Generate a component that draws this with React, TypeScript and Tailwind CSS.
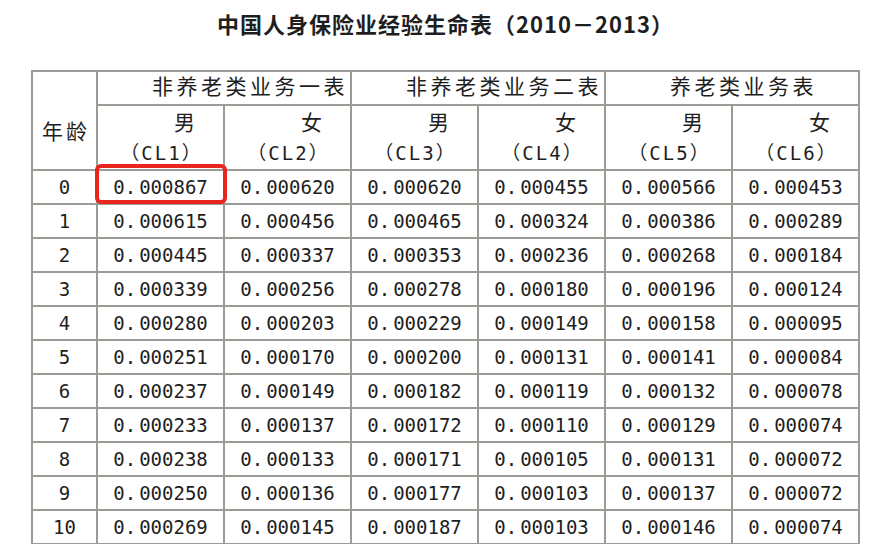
import React from 'react';

const rows: string[][] = [
  ['0.000867', '0.000620', '0.000620', '0.000455', '0.000566', '0.000453'],
  ['0.000615', '0.000456', '0.000465', '0.000324', '0.000386', '0.000289'],
  ['0.000445', '0.000337', '0.000353', '0.000236', '0.000268', '0.000184'],
  ['0.000339', '0.000256', '0.000278', '0.000180', '0.000196', '0.000124'],
  ['0.000280', '0.000203', '0.000229', '0.000149', '0.000158', '0.000095'],
  ['0.000251', '0.000170', '0.000200', '0.000131', '0.000141', '0.000084'],
  ['0.000237', '0.000149', '0.000182', '0.000119', '0.000132', '0.000078'],
  ['0.000233', '0.000137', '0.000172', '0.000110', '0.000129', '0.000074'],
  ['0.000238', '0.000133', '0.000171', '0.000105', '0.000131', '0.000072'],
  ['0.000250', '0.000136', '0.000177', '0.000103', '0.000137', '0.000072'],
  ['0.000269', '0.000145', '0.000187', '0.000103', '0.000146', '0.000074'],
];

const subCols = [
  { sex: '男', code: 'CL1' },
  { sex: '女', code: 'CL2' },
  { sex: '男', code: 'CL3' },
  { sex: '女', code: 'CL4' },
  { sex: '男', code: 'CL5' },
  { sex: '女', code: 'CL6' },
];

const mono = "font-['DejaVu_Sans_Mono','Noto_Sans_CJK_SC',monospace]";
const cell = 'border-2 border-[#9c9c96] p-0';

function Num({ value }: { value: string }) {
  const [a, b] = value.split('.');
  return (
    <span>
      {a}
      <span className="mr-[3px]">.</span>
      {b}
    </span>
  );
}

export default function App() {
  return (
    <div className="w-[885px] h-[544px] overflow-hidden bg-white text-[#1e1e1e]">
      {/* 标题 */}
      <div className="h-[46px] flex items-center justify-center pl-[6px]">
        <h1 className="text-[22px] font-bold tracking-[1px] font-['Noto_Sans_CJK_SC',sans-serif]">
          中国人身保险业经验生命表（2010－2013）
        </h1>
      </div>

      <div className="pt-[24px] pl-[31px]">
        <table className={`table-fixed border-collapse w-[827px] ${mono} text-[19px] font-light`}>
          <colgroup>
            <col className="w-[65px]" />
            <col className="w-[127px]" />
            <col className="w-[127px]" />
            <col className="w-[127px]" />
            <col className="w-[127px]" />
            <col className="w-[127px]" />
            <col className="w-[127px]" />
          </colgroup>
          <thead>
            <tr className="h-[34px]">
              <th rowSpan={2} className={`${cell} font-normal text-center tracking-[3px] text-[21px] pl-[3px] pt-[24px]`}>
                年龄
              </th>
              <th colSpan={2} className={`${cell} font-normal text-left pl-[54px] tracking-[3.5px] text-[21px]`}>
                非养老类业务一表
              </th>
              <th colSpan={2} className={`${cell} font-normal text-left pl-[54px] tracking-[3.5px] text-[21px]`}>
                非养老类业务二表
              </th>
              <th colSpan={2} className={`${cell} font-normal text-left pl-[64px] tracking-[3.5px] text-[21px]`}>
                养老类业务表
              </th>
            </tr>
            <tr className="h-[65px]">
              {subCols.map((c) => (
                <th key={c.code} className={`${cell} font-normal text-center leading-[30px]`}>
                  <div className="pl-[48px] text-[21px]">{c.sex}</div>
                  <div className="tracking-[2px] pl-[2px]">（{c.code}）</div>
                </th>
              ))}
            </tr>
          </thead>
          <tbody>
            {rows.map((r, i) => (
              <tr key={i} className="h-[34px]">
                <td className={`${cell} text-center`}>{i}</td>
                {r.map((v, j) => (
                  <td key={j} className={`${cell} text-center ${i === 0 && j === 0 ? 'relative' : ''}`}>
                    <Num value={v} />
                    {i === 0 && j === 0 && (
                      <div className="absolute left-[-3px] right-[-4px] top-[-7px] bottom-[-1px] border-[4px] border-[#e8261d] rounded-[6px]" />
                    )}
                  </td>
                ))}
              </tr>
            ))}
          </tbody>
        </table>
      </div>
    </div>
  );
}
